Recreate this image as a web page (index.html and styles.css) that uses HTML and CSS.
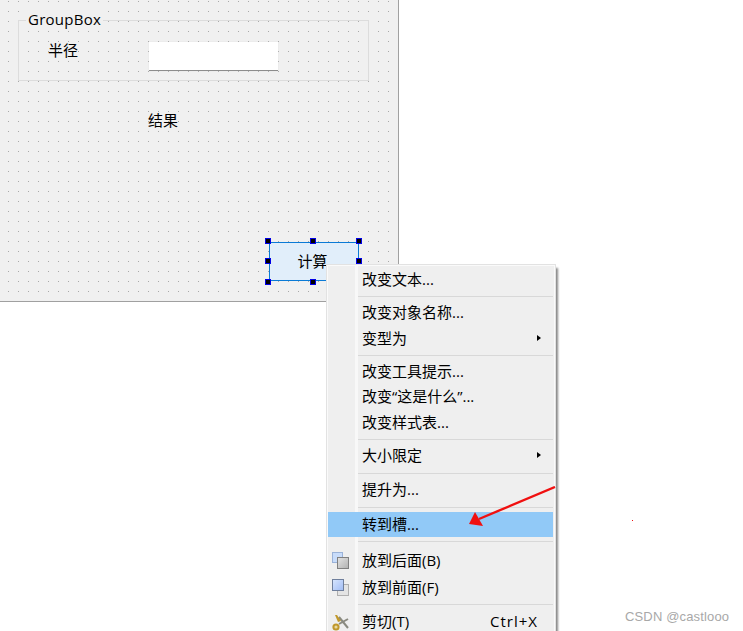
FILE: index.html
```html
<!DOCTYPE html>
<html lang="zh">
<head>
<meta charset="utf-8">
<title>Designer</title>
<link rel="stylesheet" href="styles.css">
</head>
<body>
<div class="stage">
  <div class="form">
    <div class="group"><span class="group-title">GroupBox</span></div>
    <span class="label radius-label">半径</span>
    <div class="line-edit"></div>
    <span class="label result-label">结果</span>
    <div class="button">计算</div>
    <i class="handle h-tl"></i><i class="handle h-tc"></i><i class="handle h-tr"></i>
    <i class="handle h-ml"></i><i class="handle h-mr"></i>
    <i class="handle h-bl"></i><i class="handle h-bc"></i><i class="handle h-br"></i>
  </div>

  <div class="menu">
    <div class="gutter"></div>
    <div class="row">改变文本...</div>
    <div class="sep"></div>
    <div class="row">改变对象名称...</div>
    <div class="row has-sub">变型为<span class="caret"></span></div>
    <div class="sep"></div>
    <div class="row">改变工具提示...</div>
    <div class="row">改变“这是什么”...</div>
    <div class="row">改变样式表...</div>
    <div class="sep"></div>
    <div class="row has-sub">大小限定<span class="caret"></span></div>
    <div class="sep sep-b"></div>
    <div class="row">提升为...</div>
    <div class="sep sep-c"></div>
    <div class="row active">转到槽...</div>
    <div class="sep sep-d"></div>
    <div class="row tall">
      <svg class="icon" viewBox="0 0 17 17"><defs><linearGradient id="gb" x1="0" y1="0" x2="1" y2="1"><stop offset="0" stop-color="#e4e4e4"/><stop offset="1" stop-color="#b0b0b0"/></linearGradient></defs><rect x="0.5" y="0.5" width="10" height="10" fill="#c8dcfa" stroke="#9ab2d8"/><rect x="5.5" y="5.5" width="11" height="11" fill="url(#gb)" stroke="#808080"/></svg>
      放到后面(B)
    </div>
    <div class="row tall">
      <svg class="icon" viewBox="0 0 17 17"><defs><linearGradient id="gf" x1="0" y1="0" x2="1" y2="1"><stop offset="0" stop-color="#d8e6fe"/><stop offset="1" stop-color="#a0bcf4"/></linearGradient></defs><rect x="5.5" y="5.5" width="11" height="11" fill="#e4e4e4" stroke="#b0b0b0"/><rect x="0.5" y="0.5" width="11" height="11" fill="url(#gf)" stroke="#6f7f9c"/></svg>
      放到前面(F)
    </div>
    <div class="sep sep-e"></div>
    <div class="row">
      <svg class="icon" viewBox="0 0 17 17"><path d="M16 5 7 10M16 14 7 3" stroke="#8a8a80" stroke-width="2" fill="none"/><circle cx="4" cy="13" r="2.6" fill="#e8d8a0" stroke="#c0982c" stroke-width="2"/><path d="M6 8 3 1 5 1 9 7Z" fill="#c0982c"/></svg>
      剪切(T)<span class="shortcut">Ctrl+X</span>
    </div>
  </div>

  <svg class="arrow" viewBox="0 0 90 42"><path d="M88 1 12 33" stroke="#f01010" stroke-width="2.4" fill="none"/><path d="M2 38 8 26 16 40Z" fill="#f01010"/></svg>
  <i class="red-dot"></i>
  <span class="watermark">CSDN @castlooo</span>
</div>
</body>
</html>
```

FILE: styles.css
```css
html, body {
  margin: 0;
  padding: 0;
  background: #fff;
}
.stage {
  position: relative;
  width: 743px;
  height: 631px;
  overflow: hidden;
  font-family: "Open Sans", "Noto Sans CJK SC", sans-serif;
  font-size: 15px;
  color: #000;
}
.form {
  position: absolute;
  left: 0;
  top: 0;
  width: 398px;
  height: 301px;
  background-color: #f0f0f0;
  background-image: radial-gradient(circle at 0.5px 0.5px, #a8a8a8 0.7px, transparent 0.7px);
  background-size: 10px 10px;
  background-position: 8px 1px;
  border-right: 1px solid #a0a0a0;
  border-bottom: 1px solid #a0a0a0;
}
.group {
  position: absolute;
  left: 18px;
  top: 20px;
  width: 349px;
  height: 59px;
  border: 1px solid #dcdcdc;
}
.group-title {
  position: absolute;
  left: 7px;
  top: -11px;
  padding: 0 2px;
  line-height: 18px;
  letter-spacing: 0.25px;
  background: #f0f0f0;
}
.label {
  position: absolute;
  line-height: 20px;
}
.radius-label { left: 48px; top: 40px; }
.result-label { left: 148px; top: 110px; }
.line-edit {
  position: absolute;
  left: 149px;
  top: 42px;
  width: 129px;
  height: 28px;
  background: #fff;
  border-bottom: 1px solid #8c8c8c;
  box-shadow: 0 0 1px #d8d8d8;
}
.button {
  position: absolute;
  left: 269px;
  top: 242px;
  box-sizing: border-box;
  width: 90px;
  height: 39px;
  padding: 0 3px 2px 0;
  display: flex;
  align-items: center;
  justify-content: center;
  background: #e1eefa;
  border: 1px solid #0a7ad6;
}
.handle {
  position: absolute;
  width: 4px;
  height: 4px;
  background: #000;
  border: 1px solid #0000e6;
}
.h-tl { left: 265px; top: 238px; }
.h-tc { left: 310px; top: 238px; }
.h-tr { left: 356px; top: 238px; }
.h-ml { left: 265px; top: 258px; }
.h-mr { left: 356px; top: 258px; }
.h-bl { left: 265px; top: 279px; }
.h-bc { left: 310px; top: 279px; }
.h-br { left: 356px; top: 279px; }
.menu {
  position: absolute;
  left: 326px;
  top: 264px;
  box-sizing: border-box;
  width: 230px;
  height: 380px;
  padding: 2.25px 2px 0 1px;
  background: #efefef;
  border: 1px solid #e2e2e2;
  box-shadow: inset 0 0 0 1px #fafafa, 3px 3px 2px -1px #8a8a8a;
}
.gutter {
  position: absolute;
  left: 28px;
  top: 1px;
  bottom: 0;
  width: 3px;
  background: #f8f8f8;
}
.row {
  position: relative;
  height: 25.5px;
  line-height: 25.5px;
  padding-left: 34px;
  white-space: nowrap;
}
.row.tall { height: 27px; line-height: 26px; }
.row.active { height: 25px; line-height: 25px; background: #91c9f7; }
.sep {
  position: relative;
  height: 1px;
  margin: 3.25px 0 3.25px 30px;
  background: #d8d8d8;
}
.sep-b { margin: 4.25px 0 3.25px 30px; }
.sep-c { margin: 4.75px 0 4px 30px; }
.sep-d { margin: 4px 0 4.5px 30px; }
.sep-e { margin: 3.5px 0 4.25px 30px; }
.caret {
  position: absolute;
  right: 12px;
  top: 9px;
  border-left: 4px solid #000;
  border-top: 3px solid transparent;
  border-bottom: 3px solid transparent;
}
.icon {
  position: absolute;
  left: 4px;
  top: 5px;
  width: 17px;
  height: 17px;
}
.shortcut {
  position: absolute;
  right: 15px;
  top: 0;
  letter-spacing: 1px;
}
.arrow {
  position: absolute;
  left: 467px;
  top: 486px;
  width: 90px;
  height: 42px;
}
.red-dot {
  position: absolute;
  left: 632px;
  top: 520px;
  width: 1px;
  height: 1px;
  background: #f01010;
}
.watermark {
  position: absolute;
  left: 625px;
  top: 608px;
  font-family: "Liberation Sans", sans-serif;
  font-size: 13px;
  letter-spacing: 0.15px;
  line-height: 18px;
  color: #a8a8a8;
}
```
